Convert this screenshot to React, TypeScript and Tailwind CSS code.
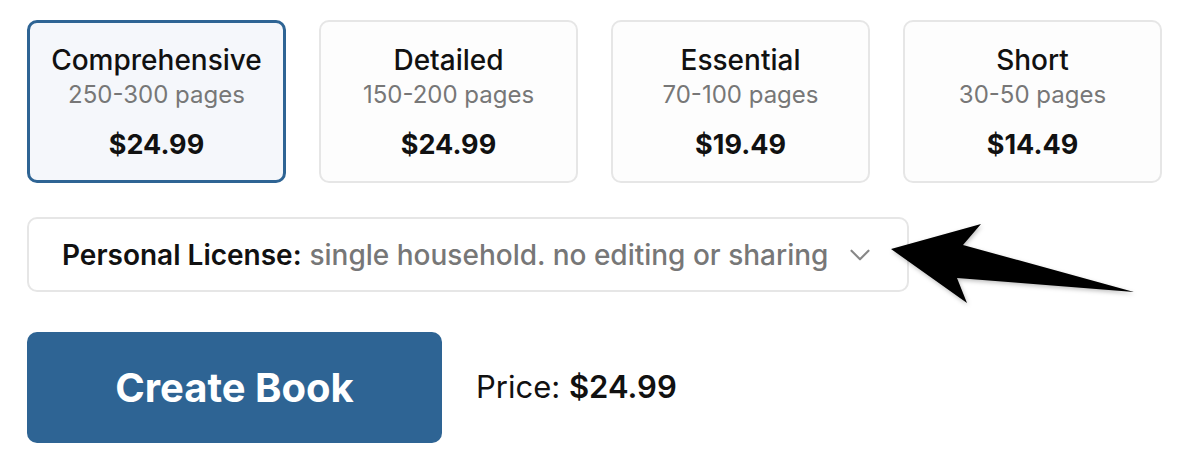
import { ChevronDown } from 'lucide-react';

type Plan = {
  name: string;
  pages: string;
  price: string;
};

const plans: Plan[] = [
  { name: 'Comprehensive', pages: '250-300 pages', price: '$24.99' },
  { name: 'Detailed', pages: '150-200 pages', price: '$24.99' },
  { name: 'Essential', pages: '70-100 pages', price: '$19.49' },
  { name: 'Short', pages: '30-50 pages', price: '$14.49' },
];

const PlanCard = ({ plan, selected }: { plan: Plan; selected: boolean }) => (
  <button
    className={`flex h-[163px] w-[259px] flex-col items-center rounded-[10px] ${
      selected
        ? 'border-[3px] border-[#2e6494] bg-[#f5f7fb] pt-[20px]'
        : 'border-2 border-[#e6e6e6] bg-[#fdfdfd] pt-[21px]'
    }`}
  >
    <span className="text-[28px] font-medium leading-[34px] text-[#111]">{plan.name}</span>
    <span className="mt-[3px] text-[24px] leading-[30px] text-[#777]">{plan.pages}</span>
    <span className="mt-[18px] text-[27px] font-bold leading-[34px] text-[#111]">{plan.price}</span>
  </button>
);

const App = () => {
  const selected = 0;

  return (
    <div className="relative h-[466px] w-[1192px] overflow-hidden bg-white pl-[27px] pt-[20px] font-['Inter','Liberation_Sans',sans-serif]">
      <div className="flex gap-[33px]">
        {plans.map((p, i) => (
          <PlanCard key={p.name} plan={p} selected={i === selected} />
        ))}
      </div>

      {/* License picker */}
      <div className="mt-[34px] flex h-[75px] w-[882px] items-center justify-between rounded-[10px] border-2 border-[#e6e6e6] pl-[33px] pr-[30px]">
        <span className="text-[28px] leading-none">
          <span className="font-semibold text-[#111]">Personal License:</span>{' '}
          <span className="font-medium text-[#777]">single household. no editing or sharing</span>
        </span>
        <ChevronDown className="h-[34px] w-[34px] text-[#888]" strokeWidth={1.5} />
      </div>

      <div className="mt-[40px] flex items-center gap-[34px]">
        <button className="flex h-[111px] w-[415px] items-center justify-center rounded-[10px] bg-[#2e6494] text-[40px] font-bold text-white">
          Create Book
        </button>
        <span className="text-[31px] text-[#111]">
          Price: <span className="font-semibold">$24.99</span>
        </span>
      </div>

      {/* annotation arrow */}
      <svg
        className="pointer-events-none absolute left-0 top-0"
        width="1192"
        height="466"
        viewBox="0 0 1192 466"
      >
        <polygon
          points="891,249 981,224 963,245 1134,292 957,278 967,303"
          fill="#000"
          style={{ filter: 'drop-shadow(1px 2px 2px rgba(0,0,0,0.25))' }}
        />
      </svg>
    </div>
  );
};

export default App;
